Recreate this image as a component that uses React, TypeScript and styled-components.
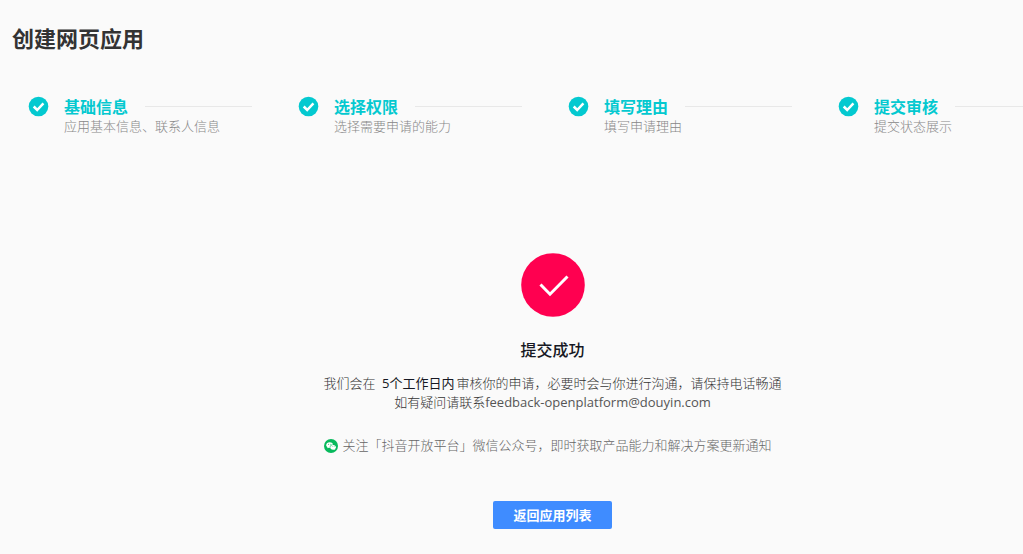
import React from "react";
import styled, { createGlobalStyle } from "styled-components";

const GlobalStyle = createGlobalStyle`
  * { box-sizing: border-box; }
  body {
    margin: 0;
    background: #fafafa;
    color: #333;
    font-family: "Open Sans", "Noto Sans CJK SC", sans-serif;
    font-size: 13px;
  }
`;

const Viewport = styled.div`
  overflow: hidden;
  min-height: 100vh;
  background: #fafafa;
`;

const Page = styled.main`
  min-width: 1105px;
  padding-top: 22px;
`;

const Title = styled.h1`
  margin: 0;
  padding-left: 12px;
  font-size: 22px;
  line-height: 32px;
  font-weight: 700;
  color: #333;
`;

const Steps = styled.ol`
  display: grid;
  grid-template-columns: repeat(4, minmax(270px, 1fr));
  margin: 42px 0 0;
  padding: 0 0 0 28px;
  list-style: none;
`;

const Step = styled.li`
  display: flex;
  align-items: flex-start;
  gap: 15px;
  padding-right: 46px;
`;

const StepBody = styled.div`
  flex: 1;
  min-width: 0;
`;

const StepHead = styled.div`
  display: flex;
  align-items: center;
  gap: 17px;
  height: 20px;

  &::after {
    content: "";
    flex: 1;
    height: 1px;
    background: #e8e8e8;
  }
`;

const StepTitle = styled.h2`
  margin: 0;
  padding-top: 2px;
  font-size: 16px;
  line-height: 20px;
  font-weight: 700;
  color: #04c9d0;
`;

const StepNote = styled.p`
  margin: 0;
  font-size: 13px;
  line-height: 20px;
  font-weight: 300;
  color: #888;
  white-space: nowrap;
`;

const StepIcon = styled.svg`
  flex: none;
  display: block;
  width: 21px;
  height: 21px;
`;

const Result = styled.section`
  display: flex;
  flex-direction: column;
  align-items: center;
  margin-top: 117px;
`;

const ResultIcon = styled.svg`
  display: block;
  width: 64px;
  height: 64px;
`;

const ResultTitle = styled.h2`
  margin: 21px 0 12px;
  font-size: 16px;
  line-height: 24px;
  font-weight: 500;
  color: #161823;
`;

const Message = styled.div`
  display: flex;
  flex-direction: column;
`;

const Text = styled.p`
  margin: 0;
  line-height: 19px;
  font-weight: 300;
  text-align: center;
  color: #333;
`;

const Strong = styled.strong`
  margin: 0 2px 0 3px;
  font-weight: 400;
  color: #161823;
`;

const Email = styled.span`
  font-weight: 400;
  color: #555;
`;

const Follow = styled.p`
  display: flex;
  align-items: center;
  gap: 5px;
  margin: 24px 0 0;
  line-height: 19px;
  font-weight: 300;
  color: #666;
`;

const WechatIcon = styled.svg`
  flex: none;
  width: 14px;
  height: 14px;
`;

const BackButton = styled.button`
  height: 28px;
  margin: 46px 0 24px;
  padding: 0 20px;
  border: 0;
  border-radius: 2px;
  background: #3f8cff;
  color: #fff;
  font-family: inherit;
  font-size: 13px;
  line-height: 28px;
  font-weight: 700;
  cursor: pointer;
`;

const steps = [
  { title: "基础信息", note: "应用基本信息、联系人信息" },
  { title: "选择权限", note: "选择需要申请的能力" },
  { title: "填写理由", note: "填写申请理由" },
  { title: "提交审核", note: "提交状态展示" },
];

export default function App() {
  return (
    <>
      <GlobalStyle />
      <Viewport>
        <Page>
          <Title>创建网页应用</Title>
          <Steps>
            {steps.map((step) => (
              <Step key={step.title}>
                <StepIcon viewBox="0 0 21 21" aria-hidden="true">
                  <circle cx="10.5" cy="10.5" r="9.8" fill="#04c9d0" />
                  <path d="M5.7 10.5 9.2 14 15.4 7.4" fill="none" stroke="#fff" strokeWidth="2.5" />
                </StepIcon>
                <StepBody>
                  <StepHead>
                    <StepTitle>{step.title}</StepTitle>
                  </StepHead>
                  <StepNote>{step.note}</StepNote>
                </StepBody>
              </Step>
            ))}
          </Steps>
          <Result>
            <ResultIcon viewBox="0 0 64 64" aria-hidden="true">
              <circle cx="32" cy="32" r="31.8" fill="#ff0050" />
              <path d="M19.5 31.5 29 41.2 46.5 23.5" fill="none" stroke="#fff" strokeWidth="3" />
            </ResultIcon>
            <ResultTitle>提交成功</ResultTitle>
            <Message>
              <Text>
                我们会在 <Strong>5个工作日内</Strong>审核你的申请，必要时会与你进行沟通，请保持电话畅通
              </Text>
              <Text>
                如有疑问请联系<Email>feedback-openplatform@douyin.com</Email>
              </Text>
              <Follow>
                <WechatIcon viewBox="0 0 14 14" aria-hidden="true">
                  <circle cx="7" cy="7" r="7" fill="#07b95c" />
                  <path d="M5.7 3.2c-2 0-3.5 1.2-3.5 2.8 0 .9.5 1.7 1.3 2.2L3.2 9.3l1.3-.6c.4.1.8.2 1.2.2-.3-2 1.300-3.500 3.400-3.500C8.7 4.1 7.3 3.2 5.7 3.2Z" fill="#fff" />
                  <path d="M9.1 5.9c-1.7 0-2.9 1.1-2.9 2.4s1.2 2.4 2.9 2.4c.4 0 .8-.1 1.1-.2l1 .5-.2-.9c.6-.4 1-1.1 1-1.8 0-1.3-1.2-2.4-2.9-2.4Z" fill="#fff" />
                  <g fill="#07b95c">
                    <circle cx="4.6" cy="5.3" r=".5" />
                    <circle cx="6.9" cy="5.3" r=".5" />
                    <circle cx="8.2" cy="7.7" r=".4" />
                    <circle cx="10.1" cy="7.7" r=".4" />
                  </g>
                </WechatIcon>
                <span>关注「抖音开放平台」微信公众号，即时获取产品能力和解决方案更新通知</span>
              </Follow>
            </Message>
            <BackButton type="button">返回应用列表</BackButton>
          </Result>
        </Page>
      </Viewport>
    </>
  );
}
